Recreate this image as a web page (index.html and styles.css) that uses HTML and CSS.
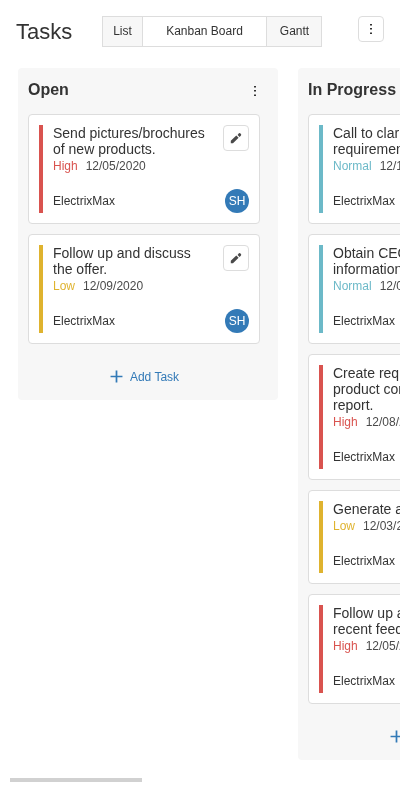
FILE: index.html
```html
<!DOCTYPE html>
<html lang="en">
<head>
<meta charset="utf-8">
<title>Tasks</title>
<link rel="stylesheet" href="styles.css">
</head>
<body>
<svg class="defs" width="0" height="0">
  <symbol id="pencil" viewBox="0 0 12 12"><path d="M.8 11.2V8.8L6.3 3.6L8.6 5.8L3 11.2ZM7.6 2.9L8.9 1.3Q9.6 .6 10.5 1.4Q11.7 2.4 11 3.4L9.6 4.9Z"/></symbol>
  <symbol id="dots" viewBox="0 0 4 12"><path d="M1 1h2v1.5H1zM1 5h2v1.5H1zM1 9.4h2v1.5H1z"/></symbol>
  <symbol id="plus" viewBox="0 0 12 12"><path d="M5.2 .5h1.6v4.7h4.7v1.6H6.8v4.7H5.2V6.8H.5V5.2h4.7z"/></symbol>
</svg>
<div class="app">
<header class="toolbar">
  <h1>Tasks</h1>
  <nav class="tabs">
    <span class="tab list">List</span>
    <span class="tab board-tab active">Kanban Board</span>
    <span class="tab gantt">Gantt</span>
  </nav>
  <button class="icon-button more"><svg class="dots"><use href="#dots"/></svg></button>
</header>
<main class="board">
  <section class="column">
    <header class="column-head"><h2>Open</h2><svg class="dots"><use href="#dots"/></svg></header>
    <article class="card high">
      <div class="bar"></div>
      <div class="body"><h3>Send pictures/brochures of new products.</h3><p class="meta"><b>High</b><span>12/05/2020</span></p><p class="company">ElectrixMax</p></div>
      <div class="side"><button class="icon-button"><svg class="pencil"><use href="#pencil"/></svg></button><span class="avatar">SH</span></div>
    </article>
    <article class="card low">
      <div class="bar"></div>
      <div class="body"><h3>Follow up and discuss the offer.</h3><p class="meta"><b>Low</b><span>12/09/2020</span></p><p class="company">ElectrixMax</p></div>
      <div class="side"><button class="icon-button"><svg class="pencil"><use href="#pencil"/></svg></button><span class="avatar">SH</span></div>
    </article>
    <div class="add"><svg class="plus"><use href="#plus"/></svg>Add Task</div>
  </section>
  <section class="column">
    <header class="column-head"><h2>In Progress</h2><svg class="dots"><use href="#dots"/></svg></header>
    <article class="card normal">
      <div class="bar"></div>
      <div class="body"><h3>Call to clarify<br>requirements.</h3><p class="meta"><b>Normal</b><span>12/10/2020</span></p><p class="company">ElectrixMax</p></div>
    </article>
    <article class="card normal">
      <div class="bar"></div>
      <div class="body"><h3>Obtain CEO<br>information.</h3><p class="meta"><b>Normal</b><span>12/04/2020</span></p><p class="company">ElectrixMax</p></div>
    </article>
    <article class="card high">
      <div class="bar"></div>
      <div class="body"><h3>Create requested<br>product comparison<br>report.</h3><p class="meta"><b>High</b><span>12/08/2020</span></p><p class="company">ElectrixMax</p></div>
    </article>
    <article class="card low">
      <div class="bar"></div>
      <div class="body"><h3>Generate a report.</h3><p class="meta"><b>Low</b><span>12/03/2020</span></p><p class="company">ElectrixMax</p></div>
    </article>
    <article class="card high">
      <div class="bar"></div>
      <div class="body"><h3>Follow up about<br>recent feedback.</h3><p class="meta"><b>High</b><span>12/05/2020</span></p><p class="company">ElectrixMax</p></div>
    </article>
    <div class="add"><svg class="plus"><use href="#plus"/></svg>Add Task</div>
  </section>
</main>
<div class="scrollbar"><div class="thumb"></div></div>
</div>
</body>
</html>
```
FILE: styles.css
```css
* { box-sizing: border-box; }
body {
  margin: 0;
  width: 400px;
  height: 800px;
  overflow: hidden;
  background: #fff;
  color: #333;
  font: 12px/16px "Liberation Sans", Arial, sans-serif;
}
h1, h2, h3, p { margin: 0; }
svg { display: block; flex: none; }
.defs { display: none; }
.app { height: 800px; will-change: transform; }
.toolbar { display: flex; align-items: flex-start; height: 68px; padding: 16px 16px 0; }
h1 { width: 86px; font-size: 22px; line-height: 32px; font-weight: 400; }
.tabs { display: flex; width: 220px; height: 31px; border: 1px solid #ddd; }
.tab { line-height: 29px; text-align: center; background: #f7f7f7; }
.tab + .tab { border-left: 1px solid #ddd; }
.list { width: 39px; }
.board-tab { width: 124px; }
.gantt { flex: 1; padding-left: 1px; }
.tab.active { background: #fff; }
.icon-button {
  display: flex;
  align-items: center;
  justify-content: center;
  flex: none;
  width: 26px;
  height: 26px;
  padding: 0;
  border: 1px solid #ddd;
  border-radius: 4px;
  background: #fff;
}
.more { margin-left: auto; }
.dots { width: 4px; height: 12px; fill: #333; }
.pencil { width: 12px; height: 12px; margin-bottom: 1px; fill: #4a4a4a; }
.board { display: flex; align-items: flex-start; gap: 20px; height: 710px; padding-left: 18px; overflow: hidden; }
.column {
  display: flex;
  flex-direction: column;
  flex: none;
  width: 260px;
  padding: 0 18px 0 10px;
  border-radius: 4px;
  background: #f7f7f7;
}
.column-head { display: flex; align-items: center; justify-content: space-between; height: 46px; padding: 0 3px 3px 0; }
.column-head .dots { margin-top: 3px; }
h2 { font-size: 16px; line-height: 20px; font-weight: 700; }
.card {
  display: flex;
  padding: 10px;
  border: 1px solid #ddd;
  border-radius: 4px;
  background: #fff;
}
.card + .card { margin-top: 10px; }
.bar { flex: none; width: 4px; margin-right: 10px; }
.body { flex: 1; min-width: 0; padding-bottom: 4px; }
h3 { font-size: 14px; line-height: 16px; font-weight: 400; }
.meta { display: flex; gap: 8px; line-height: 18px; color: #4a4a4a; }
.meta b { font-weight: 400; }
.company { margin-top: 18px; }
.side { display: flex; flex-direction: column; align-items: flex-end; justify-content: space-between; margin-left: 14px; }
.avatar { width: 24px; height: 24px; border-radius: 50%; background: #337ab7; color: #fff; line-height: 24px; text-align: center; }
.high .bar { background: #d9534f; }
.high b { color: #d9534f; }
.low .bar { background: #dfb32f; }
.low b { color: #dfb32f; }
.normal .bar { background: #6cb9c8; }
.normal b { color: #6cb9c8; }
.add { display: flex; align-items: center; justify-content: center; gap: 7px; height: 56px; padding: 10px 0 0 1px; color: #337ab7; }
.plus { width: 13px; height: 13px; margin-bottom: 1px; fill: #337ab7; }
.scrollbar { padding-left: 10px; }
.thumb { width: 132px; height: 4px; background: #d1d1d1; }
```
